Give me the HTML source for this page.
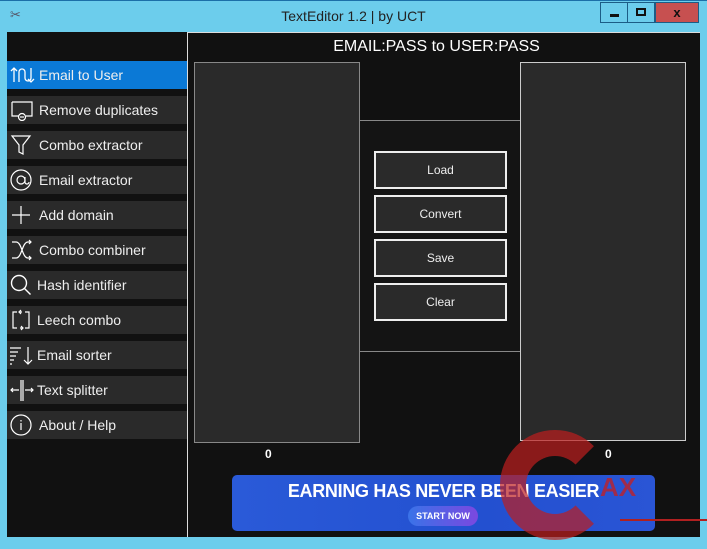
<!DOCTYPE html>
<html><head><style>
*{margin:0;padding:0;box-sizing:border-box}
body{width:707px;height:549px;background:#6ccdec;position:relative;overflow:hidden;font-family:"Liberation Sans",sans-serif}
.a{position:absolute}
.title{left:0;top:0;width:707px;height:32px;border-top:1px solid #1b6fa8}
.tt{left:0;width:707px;top:8px;text-align:center;font-size:14px;color:#222}
.left{left:7px;top:32px;width:180px;height:505px;background:#111}
.main{left:187px;top:32px;width:513px;height:505px;background:#111;border-left:1px solid #ddd;border-top:1px solid #ddd}
.item{position:absolute;left:0;width:180px;height:28px;background:#2a2a2a;color:#eee;font-size:14px;line-height:28px}
.item.sel{background:#0b79d6}
.item svg{position:absolute;left:3px;top:3px}
.item span{position:absolute;left:32px}
.box{background:#2a2a2a;border:1px solid #888}
.btn{position:absolute;left:374px;width:133px;height:38px;background:#2a2a2a;border:2px solid #eee;color:#eee;font-size:12px;text-align:center;line-height:34px}
.wb{top:2px;height:21px;border:1px solid #1c5d86;text-align:center;font-size:13px;font-weight:bold}
</style></head><body>
<div class="a title"></div>
<div class="a" style="left:10px;top:7px;font-size:13px;color:#556">&#9986;</div>
<div class="a tt">TextEditor 1.2 | by UCT</div>
<div class="a wb" style="left:600px;width:28px"><div style="margin:11px auto 0;width:9px;height:3px;background:#111"></div></div>
<div class="a wb" style="left:627px;width:28px"><div style="margin:5px auto 0;width:10px;height:8px;border:2px solid #111"></div></div>
<div class="a wb" style="left:655px;width:44px;background:#c75050;color:#111;line-height:19px">x</div>

<div class="a left">
<div class="item sel" style="top:29px"><svg width="26" height="22" fill="none" stroke="#fff" stroke-width="1.3"><path d="M4 4v14M1 7l3-3 3 3M9 18V8a3 3 0 016 0v6a3 3 0 006 0V4M18 15l3 3 3-3"/></svg><span>Email to User</span></div>
<div class="item" style="top:64px"><svg width="26" height="22" fill="none" stroke="#fff" stroke-width="1.2"><path d="M2 3h20v14h-6M9 17H2V3"/><circle cx="12" cy="18" r="3.5"/><path d="M10 18h4"/></svg><span>Remove duplicates</span></div>
<div class="item" style="top:99px"><svg width="26" height="22" fill="none" stroke="#fff" stroke-width="1.2"><path d="M2 2h18l-7 9v9l-4-2v-7z"/></svg><span>Combo extractor</span></div>
<div class="item" style="top:134px"><svg width="26" height="22" fill="none" stroke="#fff" stroke-width="1.2"><circle cx="11" cy="11" r="10"/><circle cx="11" cy="11" r="4"/><path d="M15 8v5a2 2 0 004 0"/></svg><span>Email extractor</span></div>
<div class="item" style="top:169px"><svg width="26" height="22" fill="none" stroke="#fff" stroke-width="1.2"><path d="M11 2v18M2 11h18"/></svg><span>Add domain</span></div>
<div class="item" style="top:204px"><svg width="26" height="22" fill="none" stroke="#fff" stroke-width="1.2"><path d="M2 3h4c6 0 6 16 12 16h3M2 19h4c6 0 6-16 12-16h3M19 1l2 2-2 2M19 17l2 2-2 2"/></svg><span>Combo combiner</span></div>
<div class="item" style="top:239px"><svg width="26" height="22" fill="none" stroke="#fff" stroke-width="1.4"><circle cx="9" cy="9" r="7.5"/><path d="M14.5 14.5l6 6"/></svg><span style="left:30px">Hash identifier</span></div>
<div class="item" style="top:274px"><svg width="26" height="22" fill="none" stroke="#fff" stroke-width="1.2"><path d="M7 3H3v16h4M15 3h4v16h-4M12 3h-2M11 1l-2 2 2 2M10 19h2M11 17l2 2-2 2"/></svg><span style="left:30px">Leech combo</span></div>
<div class="item" style="top:309px"><svg width="28" height="22" fill="none" stroke="#fff" stroke-width="1.2"><path d="M0 4h11M0 8h8M0 12h6M0 16h4M0 20h2M18 3v17M14 16l4 4 4-4"/></svg><span style="left:30px">Email sorter</span></div>
<div class="item" style="top:344px"><svg width="28" height="22" fill="none" stroke="#fff" stroke-width="1.2"><path d="M11 1v21M13 1v21M1 11h8M3 9l-2 2 2 2M15 11h8M21 9l2 2-2 2"/></svg><span style="left:30px">Text splitter</span></div>
<div class="item" style="top:379px"><svg width="26" height="22" fill="none" stroke="#fff" stroke-width="1.2"><circle cx="11" cy="11" r="10"/><path d="M11 9v7M11 6v1.5"/></svg><span>About / Help</span></div>
</div>

<div class="a main"></div>
<div class="a" style="left:188px;top:38px;width:497px;text-align:center;color:#fff;font-size:16px">EMAIL:PASS to USER:PASS</div>
<div class="a box" style="left:194px;top:62px;width:166px;height:381px"></div>
<div class="a box" style="left:520px;top:62px;width:166px;height:379px;border-color:#ccc"></div>
<div class="a" style="left:360px;top:120px;width:160px;height:232px;border-top:1px solid #888;border-bottom:1px solid #888;background:#141414"></div>
<div class="btn" style="top:151px">Load</div>
<div class="btn" style="top:195px">Convert</div>
<div class="btn" style="top:239px">Save</div>
<div class="btn" style="top:283px">Clear</div>
<div class="a" style="left:265px;top:447px;color:#fff;font-size:12px;font-weight:bold">0</div>
<div class="a" style="left:605px;top:447px;color:#fff;font-size:12px;font-weight:bold">0</div>

<div class="a" style="left:232px;top:475px;width:423px;height:56px;border-radius:5px;background:linear-gradient(90deg,#2a5ad8,#2350d0 60%,#2a55d5)"></div>
<div class="a" style="left:232px;top:481px;width:423px;text-align:center;color:#fff;font-size:18px;font-weight:bold;letter-spacing:-0.3px">EARNING HAS NEVER BEEN EASIER</div>
<div class="a" style="left:408px;top:506px;width:70px;height:20px;border-radius:10px;background:linear-gradient(90deg,#3a73e8,#7a48e0);color:#fff;font-size:9px;font-weight:bold;text-align:center;line-height:20px">START NOW</div>
<div class="a" style="left:500px;top:430px;width:110px;height:110px;border-radius:50%;border:26px solid rgba(190,30,30,.7);border-right-color:transparent"></div>
<div class="a" style="left:600px;top:472px;color:rgba(200,30,30,.75);font-size:26px;font-weight:bold">AX</div>
<div class="a" style="left:620px;top:519px;width:87px;height:2px;background:#b02020"></div>
</body></html>
